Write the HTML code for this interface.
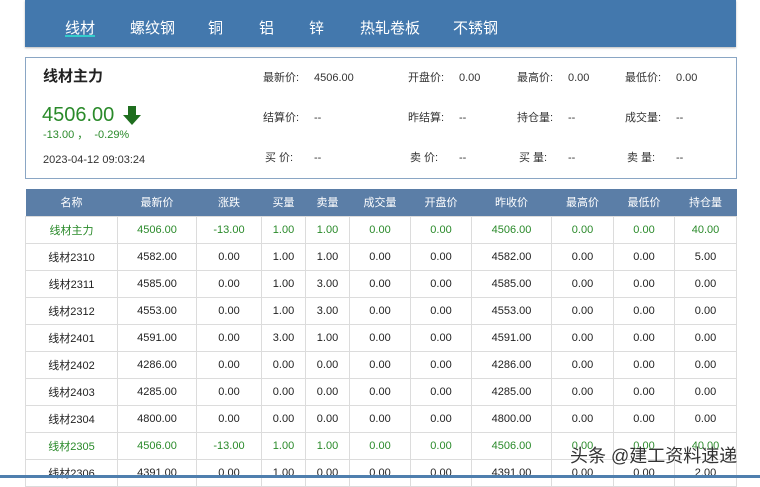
<!DOCTYPE html>
<html><head><meta charset="utf-8"><style>
*{margin:0;padding:0;box-sizing:border-box}
body{width:760px;height:478px;overflow:hidden;background:#fff;font-family:"Liberation Sans","Noto Sans CJK SC",sans-serif;position:relative;color:#333}
.nav{position:absolute;left:25px;top:0;width:711px;height:47px;background:#4378ad;box-shadow:0 1px 2px #bbb}
.nav span{position:absolute;top:17px;color:#fff;font-size:15px}
.nav .u{position:absolute;left:65px;top:35px;width:30px;height:2px;background:#3cc}
.box{position:absolute;left:25px;top:57px;width:712px;height:122px;border:1px solid #8aa6c4}
.t{position:absolute;font-size:11px;line-height:14px;color:#333;white-space:nowrap}
table{position:absolute;left:25px;top:189px;border-collapse:collapse;font-size:11px}
th{background:#5b7ea7;color:#fff;font-weight:normal;height:27px;border:none}
td{height:27px;text-align:center;border:1px solid #dcdcdc;color:#222}
tr.g td{color:#2a8a2a}
.bot{position:absolute;left:0;top:475px;width:760px;height:3px;background:#4f7fae}
.wm{position:absolute;left:570px;top:442px;font-size:18px;color:#333;text-shadow:0 0 2px #fff}
</style></head><body>
<div class="nav">
<span style="left:40px">线材</span><div class="u" style="left:40px"></div>
<span style="left:105px">螺纹钢</span>
<span style="left:183px">铜</span>
<span style="left:234px">铝</span>
<span style="left:284px">锌</span>
<span style="left:335px">热轧卷板</span>
<span style="left:428px">不锈钢</span>
</div>
<div class="box">
<div class="t" style="left:17px;top:10px;font-size:15px;line-height:18px;font-weight:bold;color:#222">线材主力</div>
<div class="t" style="left:16px;top:45px;font-size:20px;line-height:24px;color:#2a8a2a">4506.00</div>
<svg style="position:absolute;left:97px;top:48px" width="18" height="19" viewBox="0 0 18 19"><path d="M5 0h8v9h5l-9 10-9-10h5z" fill="#1f6e1f"/></svg>
<div class="t" style="left:17px;top:70px;color:#2a8a2a">-13.00 ，&nbsp; -0.29%</div>
<div class="t" style="left:17px;top:95px">2023-04-12 09:03:24</div>
<div class="t" style="left:237px;top:13px">最新价:</div><div class="t" style="left:288px;top:13px">4506.00</div>
<div class="t" style="left:382px;top:13px">开盘价:</div><div class="t" style="left:433px;top:13px">0.00</div>
<div class="t" style="left:491px;top:13px">最高价:</div><div class="t" style="left:542px;top:13px">0.00</div>
<div class="t" style="left:599px;top:13px">最低价:</div><div class="t" style="left:650px;top:13px">0.00</div>
<div class="t" style="left:237px;top:53px">结算价:</div><div class="t" style="left:288px;top:53px">--</div>
<div class="t" style="left:382px;top:53px">昨结算:</div><div class="t" style="left:433px;top:53px">--</div>
<div class="t" style="left:491px;top:53px">持仓量:</div><div class="t" style="left:542px;top:53px">--</div>
<div class="t" style="left:599px;top:53px">成交量:</div><div class="t" style="left:650px;top:53px">--</div>
<div class="t" style="left:239px;top:93px">买 价:</div><div class="t" style="left:288px;top:93px">--</div>
<div class="t" style="left:384px;top:93px">卖 价:</div><div class="t" style="left:433px;top:93px">--</div>
<div class="t" style="left:493px;top:93px">买 量:</div><div class="t" style="left:542px;top:93px">--</div>
<div class="t" style="left:601px;top:93px">卖 量:</div><div class="t" style="left:650px;top:93px">--</div>
</div>
<table>
<colgroup><col style="width:92px"><col style="width:79px"><col style="width:65px"><col style="width:44px"><col style="width:44px"><col style="width:61px"><col style="width:61px"><col style="width:80px"><col style="width:62px"><col style="width:61px"><col style="width:62px"></colgroup>
<tr><th>名称</th><th>最新价</th><th>涨跌</th><th>买量</th><th>卖量</th><th>成交量</th><th>开盘价</th><th>昨收价</th><th>最高价</th><th>最低价</th><th>持仓量</th></tr>
<tr class="g"><td>线材主力</td><td>4506.00</td><td>-13.00</td><td>1.00</td><td>1.00</td><td>0.00</td><td>0.00</td><td>4506.00</td><td>0.00</td><td>0.00</td><td>40.00</td></tr>
<tr><td>线材2310</td><td>4582.00</td><td>0.00</td><td>1.00</td><td>1.00</td><td>0.00</td><td>0.00</td><td>4582.00</td><td>0.00</td><td>0.00</td><td>5.00</td></tr>
<tr><td>线材2311</td><td>4585.00</td><td>0.00</td><td>1.00</td><td>3.00</td><td>0.00</td><td>0.00</td><td>4585.00</td><td>0.00</td><td>0.00</td><td>0.00</td></tr>
<tr><td>线材2312</td><td>4553.00</td><td>0.00</td><td>1.00</td><td>3.00</td><td>0.00</td><td>0.00</td><td>4553.00</td><td>0.00</td><td>0.00</td><td>0.00</td></tr>
<tr><td>线材2401</td><td>4591.00</td><td>0.00</td><td>3.00</td><td>1.00</td><td>0.00</td><td>0.00</td><td>4591.00</td><td>0.00</td><td>0.00</td><td>0.00</td></tr>
<tr><td>线材2402</td><td>4286.00</td><td>0.00</td><td>0.00</td><td>0.00</td><td>0.00</td><td>0.00</td><td>4286.00</td><td>0.00</td><td>0.00</td><td>0.00</td></tr>
<tr><td>线材2403</td><td>4285.00</td><td>0.00</td><td>0.00</td><td>0.00</td><td>0.00</td><td>0.00</td><td>4285.00</td><td>0.00</td><td>0.00</td><td>0.00</td></tr>
<tr><td>线材2304</td><td>4800.00</td><td>0.00</td><td>0.00</td><td>0.00</td><td>0.00</td><td>0.00</td><td>4800.00</td><td>0.00</td><td>0.00</td><td>0.00</td></tr>
<tr class="g"><td>线材2305</td><td>4506.00</td><td>-13.00</td><td>1.00</td><td>1.00</td><td>0.00</td><td>0.00</td><td>4506.00</td><td>0.00</td><td>0.00</td><td>40.00</td></tr>
<tr><td>线材2306</td><td>4391.00</td><td>0.00</td><td>1.00</td><td>0.00</td><td>0.00</td><td>0.00</td><td>4391.00</td><td>0.00</td><td>0.00</td><td>2.00</td></tr>
</table>
<div class="wm">头条 @建工资料速递</div>
<div class="bot"></div>
</body></html>
